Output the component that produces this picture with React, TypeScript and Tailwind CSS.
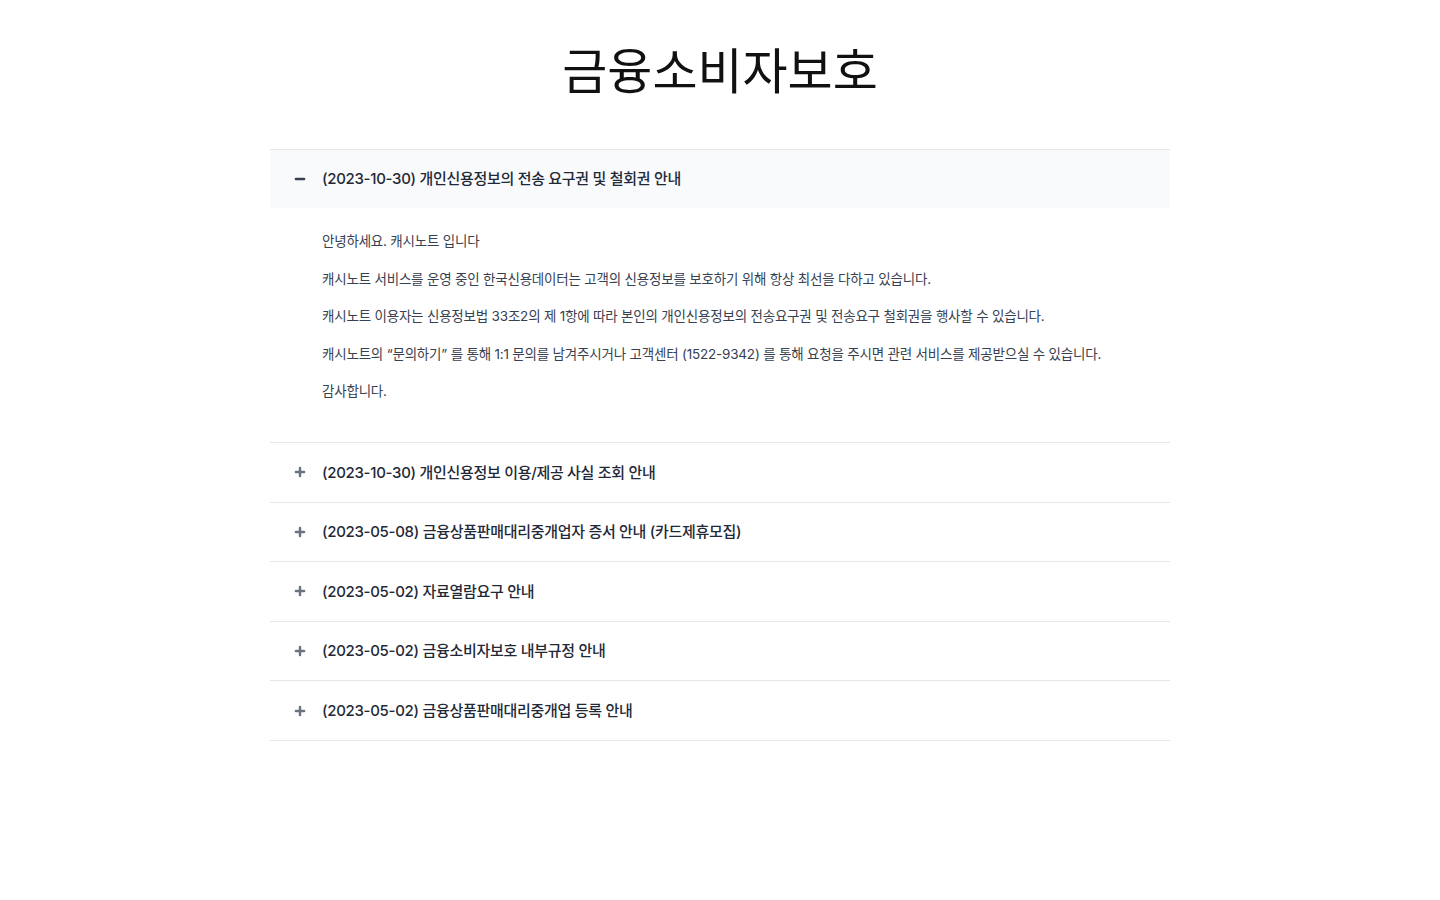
import { Minus, Plus } from "lucide-react";

type Notice = {
  title: string;
  body?: string[];
};

const notices: Notice[] = [
  {
    title: "(2023-10-30) 개인신용정보의 전송 요구권 및 철회권 안내",
    body: [
      "안녕하세요. 캐시노트 입니다",
      "캐시노트 서비스를 운영 중인 한국신용데이터는 고객의 신용정보를 보호하기 위해 항상 최선을 다하고 있습니다.",
      "캐시노트 이용자는 신용정보법 33조2의 제 1항에 따라 본인의 개인신용정보의 전송요구권 및 전송요구 철회권을 행사할 수 있습니다.",
      "캐시노트의 “문의하기” 를 통해 1:1 문의를 남겨주시거나 고객센터 (1522-9342) 를 통해 요청을 주시면 관련 서비스를 제공받으실 수 있습니다.",
      "감사합니다.",
    ],
  },
  { title: "(2023-10-30) 개인신용정보 이용/제공 사실 조회 안내" },
  { title: "(2023-05-08) 금융상품판매대리중개업자 증서 안내 (카드제휴모집)" },
  { title: "(2023-05-02) 자료열람요구 안내" },
  { title: "(2023-05-02) 금융소비자보호 내부규정 안내" },
  { title: "(2023-05-02) 금융상품판매대리중개업 등록 안내" },
];

const NoticeItem = ({ title, body }: Notice) => {
  const open = Boolean(body);
  return (
    <div className="border-[#e5e7eb] border-b">
      <div
        className={`flex items-center gap-[15px] pr-6 pl-[23px] ${open ? "h-[58px] bg-[#f9fafb]" : "h-[58.6px]"}`}
      >
        {open ? (
          <Minus className="size-[14px] text-[#374151]" strokeWidth={4.2} />
        ) : (
          <Plus className="size-[14px] text-[#6b7280]" strokeWidth={4.2} />
        )}
        <span className="pt-px font-medium text-[#1f2937] text-[15px] tracking-[-0.02em]">
          {title}
        </span>
      </div>
      {open && (
        <div className="flex flex-col gap-[16.5px] pt-[23px] pb-10 pl-[52px] text-[#374151] text-[13.5px] leading-[21px] tracking-[-0.015em]">
          {body?.map((line) => (
            <p key={line}>{line}</p>
          ))}
        </div>
      )}
    </div>
  );
};

export default function App() {
  return (
    <div
      className="min-h-screen bg-white"
      style={{ fontFamily: 'Inter, "Noto Sans CJK KR", sans-serif' }}
    >
      <main className="mx-auto w-[900px] pt-[43px]">
        <h1 className="text-center font-normal text-[#111111] text-[49px] leading-[58px]">
          금융소비자보호
        </h1>
        <section className="mt-[48px] border-[#e5e7eb] border-t">
          {notices.map((n) => (
            <NoticeItem key={n.title} {...n} />
          ))}
        </section>
      </main>
    </div>
  );
}
